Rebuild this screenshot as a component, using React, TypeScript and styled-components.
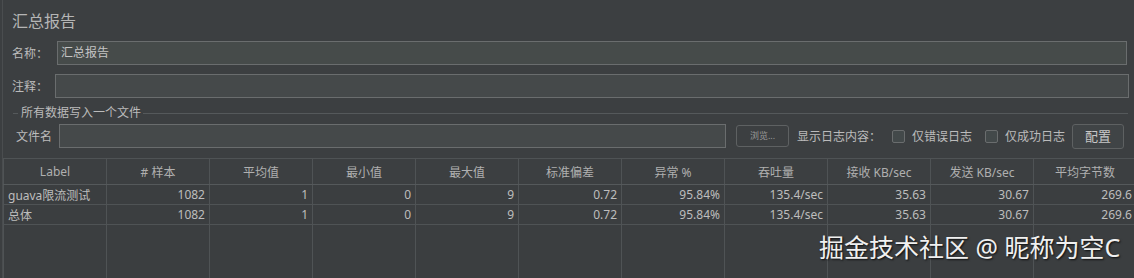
import React from 'react'
import styled, { createGlobalStyle } from 'styled-components'

const GlobalStyle = createGlobalStyle`
  html, body {
    margin: 0;
    padding: 0;
    background: #3c3f41;
  }
  body {
    font-family: 'Noto Sans', 'Noto Sans CJK SC', sans-serif;
    color: #bbbbbb;
  }
`

const Panel = styled.div`
  position: relative;
  width: 1132px;
  height: 278px;
  overflow: hidden;
  box-sizing: border-box;
  border-left: 1px solid #4a4d4f;
  margin-left: 2px;
  background: #3c3f41;
`

const Title = styled.div`
  height: 22px;
  padding: 10px 0 0 9px;
  font-size: 16px;
  line-height: 22px;
  color: #b5b5b5;
`

const FieldRow = styled.div`
  display: flex;
  align-items: center;
  height: 24px;
  margin-top: ${({ $top }) => $top}px;
  padding-left: ${({ $pad }) => $pad || 9}px;
  padding-right: ${({ $right }) => $right || 0}px;
  font-size: 12px;
`

const Label = styled.span`
  width: ${({ $w }) => $w}px;
  flex: none;
  white-space: nowrap;
`

const Input = styled.div`
  flex: ${({ $w }) => ($w ? 'none' : '1')};
  width: ${({ $w }) => ($w ? `${$w}px` : 'auto')};
  height: 24px;
  box-sizing: border-box;
  border: 1px solid #6a6d6e;
  background: ${({ $tint }) => ($tint ? '#464b4a' : '#45494a')};
  padding-left: 3px;
  font-size: 12px;
  line-height: 22px;
  color: #c4c4c4;
`

const Group = styled.div`
  display: flex;
  align-items: center;
  margin: 6px 6px 0 10px;
  font-size: 12px;
  line-height: 18px;

  &:before {
    content: '';
    width: 5px;
    height: 1px;
    background: #55595b;
  }

  &:after {
    content: '';
    flex: 1;
    height: 1px;
    margin-left: 2px;
    background: #55595b;
  }

  span {
    padding-left: 3px;
  }
`

const SmallButton = styled.div`
  flex: none;
  width: 53px;
  height: 22px;
  margin-left: 10px;
  box-sizing: border-box;
  border: 1px solid #5e6162;
  border-radius: 3px;
  font-size: 9px;
  line-height: 20px;
  text-align: center;
  color: #9a9a9a;
`

const ConfigButton = styled.div`
  flex: none;
  width: 52px;
  height: 25px;
  margin-left: 7px;
  box-sizing: border-box;
  border: 1px solid #5e6162;
  border-radius: 3px;
  background: #404446;
  font-size: 13px;
  line-height: 23px;
  text-align: center;
  color: #c8c8c8;
`

const LogLabel = styled.span`
  margin-left: 8px;
  white-space: nowrap;
`

const Check = styled.label`
  display: flex;
  align-items: center;
  margin-left: ${({ $gap }) => $gap}px;
  white-space: nowrap;

  &:before {
    content: '';
    width: 11px;
    height: 11px;
    margin-right: 7px;
    border: 1px solid #6a6d6e;
    border-radius: 2px;
    background: #43494a;
  }
`

const Table = styled.table`
  margin-top: 10px;
  border-collapse: collapse;
  table-layout: fixed;
  width: 1133px;
  font-size: 12px;
`

const Col = styled.col`
  width: 103px;
`

const Th = styled.th`
  height: 25px;
  padding: 0;
  font-weight: normal;
  color: #b0b0b0;
  border: 1px solid #4f5355;
  border-bottom-color: #55595b;
  background: #3c3f41;
  white-space: nowrap;
  overflow: hidden;
`

const Td = styled.td`
  height: 19px;
  padding: ${({ $left }) => ($left ? '0 0 0 4px' : '0 4px 0 0')};
  text-align: ${({ $left }) => ($left ? 'left' : 'right')};
  border: 1px solid #4f5355;
  background: #3b3e40;
  color: #bdbdbd;
  white-space: nowrap;
  overflow: hidden;
  font-size: 12px;
`

const FillTd = styled.td`
  height: 54px;
  padding: 0;
  border-left: 1px solid #4f5355;
  border-right: 1px solid #4f5355;
  background: #3b3e40;
`

const Watermark = styled.div`
  position: absolute;
  left: 816px;
  top: 230px;
  font-size: 25px;
  line-height: 34px;
  color: #f0f0f0;
  text-shadow: 1px 1px 2px rgba(0, 0, 0, 0.8);
  white-space: nowrap;
`

const headers = [
  'Label',
  '# 样本',
  '平均值',
  '最小值',
  '最大值',
  '标准偏差',
  '异常 %',
  '吞吐量',
  '接收 KB/sec',
  '发送 KB/sec',
  '平均字节数',
]

const rows = [
  ['guava限流测试', '1082', '1', '0', '9', '0.72', '95.84%', '135.4/sec', '35.63', '30.67', '269.6'],
  ['总体', '1082', '1', '0', '9', '0.72', '95.84%', '135.4/sec', '35.63', '30.67', '269.6'],
]

const App = () => {
  return (
    <Panel>
      <GlobalStyle />
      <Title>汇总报告</Title>

      <FieldRow $top={9} $right={7}>
        <Label $w={45}>名称：</Label>
        <Input $tint>汇总报告</Input>
      </FieldRow>

      <FieldRow $top={9} $right={5}>
        <Label $w={43}>注释：</Label>
        <Input />
      </FieldRow>

      <Group>
        <span>所有数据写入一个文件</span>
      </Group>

      <FieldRow $top={2} $pad={13}>
        <Label $w={43}>文件名</Label>
        <Input $w={667} />
        <SmallButton>浏览...</SmallButton>
        <LogLabel>显示日志内容：</LogLabel>
        <Check $gap={11}>仅错误日志</Check>
        <Check $gap={13}>仅成功日志</Check>
        <ConfigButton>配置</ConfigButton>
      </FieldRow>

      <Table>
        <colgroup>
          {headers.map((h) => (
            <Col key={h} />
          ))}
        </colgroup>
        <thead>
          <tr>
            {headers.map((h) => (
              <Th key={h}>{h}</Th>
            ))}
          </tr>
        </thead>
        <tbody>
          {rows.map((row, i) => (
            <tr key={i}>
              {row.map((cell, j) => (
                <Td key={j} $left={j === 0}>
                  {cell}
                </Td>
              ))}
            </tr>
          ))}
          <tr>
            {headers.map((h) => (
              <FillTd key={h} />
            ))}
          </tr>
        </tbody>
      </Table>

      <Watermark>掘金技术社区 @ 昵称为空C</Watermark>
    </Panel>
  )
}

export default App
